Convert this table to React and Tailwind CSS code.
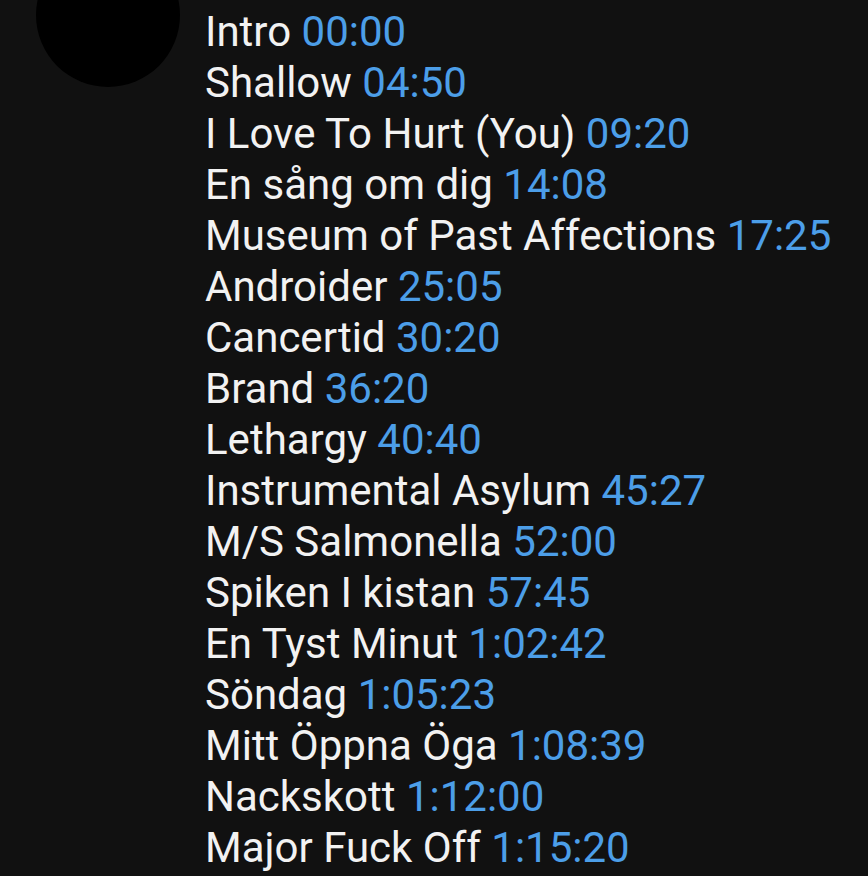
import React from 'react';

const tracks = [
  ['Intro', '00:00'],
  ['Shallow', '04:50'],
  ['I Love To Hurt (You)', '09:20'],
  ['En sång om dig', '14:08'],
  ['Museum of Past Affections', '17:25'],
  ['Androider', '25:05'],
  ['Cancertid', '30:20'],
  ['Brand', '36:20'],
  ['Lethargy', '40:40'],
  ['Instrumental Asylum', '45:27'],
  ['M/S Salmonella', '52:00'],
  ['Spiken I kistan', '57:45'],
  ['En Tyst Minut', '1:02:42'],
  ['Söndag', '1:05:23'],
  ['Mitt Öppna Öga', '1:08:39'],
  ['Nackskott', '1:12:00'],
  ['Major Fuck Off', '1:15:20'],
];

export default function App() {
  return (
    <div
      className="w-[868px] h-[876px] overflow-hidden bg-[#111111] flex"
      style={{ fontFamily: 'Roboto, "Noto Sans", sans-serif' }}
    >
      {/* avatar */}
      <div className="w-[205px] shrink-0">
        <div className="ml-[36px] -mt-[57px] w-[144px] h-[144px] rounded-full bg-black" />
      </div>

      {/* chapter list */}
      <div className="pt-[6px] text-[42px] leading-[51px] text-[#f2f2f2] whitespace-nowrap">
        {tracks.map(([title, time]) => (
          <div key={title}>
            {title} <span className="text-[#4c9ee8]">{time}</span>
          </div>
        ))}
      </div>
    </div>
  );
}
